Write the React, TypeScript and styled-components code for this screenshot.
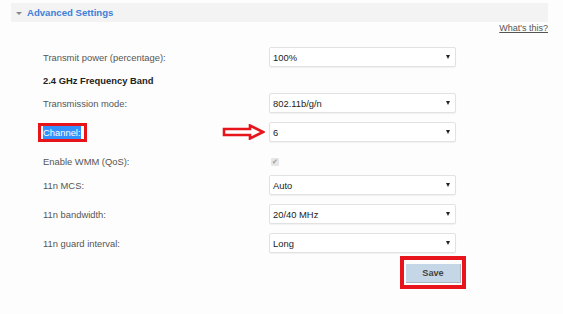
import { FC } from 'react'
import { styled, createGlobalStyle } from 'styled-components'

const Global = createGlobalStyle`
  html, body {
    margin: 0;
    padding: 0;
    background: #fdfdfd;
    font-family: 'Liberation Sans', Arial, sans-serif;
  }
`

const Page = styled.div`
  width: 563px;
  height: 314px;
  box-sizing: border-box;
  padding: 3px 15px 0 11px;
  overflow: hidden;
`

const Header = styled.div`
  display: flex;
  align-items: center;
  gap: 5px;
  height: 19px;
  padding-left: 5px;
  background: #f3f3f3;
  color: #3d7fd9;
  font-size: 9.6px;
  font-weight: bold;
`

const Caret = styled.span`
  width: 0;
  height: 0;
  border-left: 3px solid transparent;
  border-right: 3px solid transparent;
  border-top: 3px solid #8a8a8a;
  margin-top: 2px;
`

const HelpRow = styled.div`
  display: flex;
  justify-content: flex-end;
  height: 14px;
  padding-top: 1px;
`

const HelpLink = styled.a`
  color: #555;
  font-size: 9px;
  text-decoration: underline;
  cursor: pointer;
`

const Form = styled.div`
  padding: 10px 0 0 32px;
  display: flex;
  flex-direction: column;
`

const Row = styled.div<{ $pitch: number }>`
  display: grid;
  grid-template-columns: 226px 187px;
  align-items: start;
  height: ${({ $pitch }) => $pitch}px;
`

const Label = styled.div<{ $bold?: boolean }>`
  display: flex;
  align-items: center;
  height: 20px;
  font-size: 9.4px;
  color: ${({ $bold }) => ($bold ? '#222' : '#555')};
  font-weight: ${({ $bold }) => ($bold ? 'bold' : 'normal')};
`

const Marked = styled.span`
  position: relative;
  background: #3391ff;
  color: #fff;
  padding: 1px 0;

  &::after {
    content: '';
    position: absolute;
    top: -3px;
    left: -5px;
    right: -6px;
    bottom: -3px;
    border: 3px solid #e8141c;
  }
`

const Cell = styled.div`
  position: relative;
  display: flex;
  align-items: center;
  height: 20px;
`

const Select = styled.div`
  flex: 1;
  height: 20px;
  box-sizing: border-box;
  display: flex;
  align-items: center;
  justify-content: space-between;
  padding: 0 5px 0 3px;
  border: 1px solid #e2e2e2;
  border-radius: 2px;
  background: #fff;
  box-shadow: 0 1px 1px rgba(0, 0, 0, 0.05);
  font-size: 9.4px;
  color: #222;
`

const Tri = styled.span`
  width: 0;
  height: 0;
  border-left: 2.5px solid transparent;
  border-right: 2.5px solid transparent;
  border-top: 4px solid #222;
`

const Pointer = styled.svg`
  position: absolute;
  left: -47px;
  top: 2px;
`

const Check = styled.span`
  width: 8px;
  height: 8px;
  margin: 7px 0 0 2px;
  border-radius: 1px;
  background: #e6e6e6;
  color: #9a9a9a;
  font-size: 7px;
  line-height: 8px;
  text-align: center;
`

const SaveRow = styled.div`
  margin-top: -6px;
  padding-left: 389px;
`

const SaveFrame = styled.div`
  display: inline-block;
  border: 4px solid #e8141c;
  padding: 2px 1px 2px 2px;
`

const SaveButton = styled.button`
  width: 55px;
  height: 19px;
  border: none;
  border-right: 1px solid #a9b6c2;
  border-bottom: 1px solid #a9b6c2;
  background: #c5d6e6;
  color: #444;
  font-family: 'Liberation Sans', Arial, sans-serif;
  font-size: 9.2px;
  font-weight: bold;
  padding: 0;
`

const Arrow: FC = () => (
  <Pointer width="43" height="16" viewBox="0 0 43 16">
    <path
      d="M2 5 H28 V1.5 L41 8 L28 14.5 V11 H2 Z"
      fill="#fff"
      stroke="#e8141c"
      strokeWidth="2.6"
      strokeLinejoin="miter"
    />
  </Pointer>
)

const tail = [
  { label: '11n MCS:', value: 'Auto' },
  { label: '11n bandwidth:', value: '20/40 MHz' },
  { label: '11n guard interval:', value: 'Long' },
]

const Dropdown: FC<{ value: string }> = ({ value }) => (
  <Select>
    {value}
    <Tri />
  </Select>
)

const App: FC = () => (
  <Page>
    <Global />
    <Header>
      <Caret />
      Advanced Settings
    </Header>
    <HelpRow>
      <HelpLink>What's this?</HelpLink>
    </HelpRow>
    <Form>
      <Row $pitch={23}>
        <Label>Transmit power (percentage):</Label>
        <Cell>
          <Dropdown value="100%" />
        </Cell>
      </Row>
      <Row $pitch={23}>
        <Label $bold>2.4 GHz Frequency Band</Label>
      </Row>
      <Row $pitch={29}>
        <Label>Transmission mode:</Label>
        <Cell>
          <Dropdown value="802.11b/g/n" />
        </Cell>
      </Row>
      <Row $pitch={29}>
        <Label>
          <Marked>Channel:</Marked>
        </Label>
        <Cell>
          <Arrow />
          <Dropdown value="6" />
        </Cell>
      </Row>
      <Row $pitch={24}>
        <Label>Enable WMM (QoS):</Label>
        <Check>✔</Check>
      </Row>
      {tail.map((r) => (
        <Row key={r.label} $pitch={29}>
          <Label>{r.label}</Label>
          <Cell>
            <Dropdown value={r.value} />
          </Cell>
        </Row>
      ))}
    </Form>
    <SaveRow>
      <SaveFrame>
        <SaveButton>Save</SaveButton>
      </SaveFrame>
    </SaveRow>
  </Page>
)

export default App
